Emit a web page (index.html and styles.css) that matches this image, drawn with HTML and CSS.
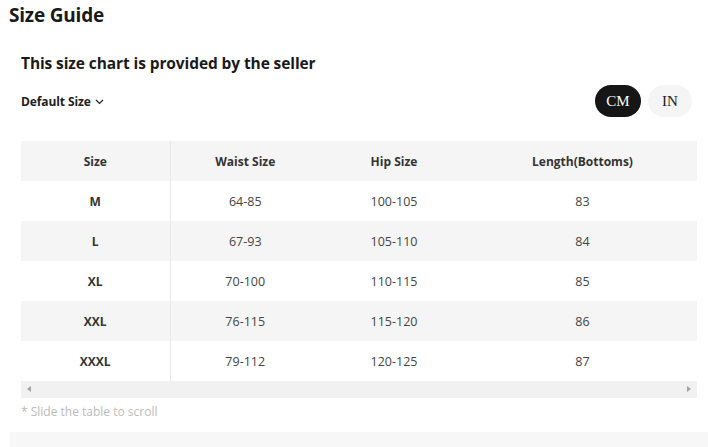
FILE: index.html
```html
<!DOCTYPE html>
<html>
<head>
<meta charset="utf-8">
<link rel="stylesheet" href="styles.css">
</head>
<body>
<div class="page">
  <h1 class="title">Size Guide</h1>
  <div class="content">
    <h2 class="subtitle">This size chart is provided by the seller</h2>
    <div class="controls">
      <div class="dropdown">Default Size
        <svg class="chev" width="9" height="6" viewBox="0 0 9 6"><path d="M1 1 L4.5 4.5 L8 1" fill="none" stroke="#222" stroke-width="1.2"/></svg>
      </div>
      <div class="units">
        <span class="unit active">CM</span>
        <span class="unit">IN</span>
      </div>
    </div>
    <div class="table-wrap">
      <table class="chart">
        <thead>
          <tr><th class="c1">Size</th><th class="c2">Waist Size</th><th class="c3">Hip Size</th><th class="c4">Length(Bottoms)</th></tr>
        </thead>
        <tbody>
          <tr><td class="c1">M</td><td>64-85</td><td>100-105</td><td>83</td></tr>
          <tr class="alt"><td class="c1">L</td><td>67-93</td><td>105-110</td><td>84</td></tr>
          <tr><td class="c1">XL</td><td>70-100</td><td>110-115</td><td>85</td></tr>
          <tr class="alt"><td class="c1">XXL</td><td>76-115</td><td>115-120</td><td>86</td></tr>
          <tr><td class="c1">XXXL</td><td>79-112</td><td>120-125</td><td>87</td></tr>
        </tbody>
      </table>
      <div class="scrollbar">
        <span class="arrow left"></span>
        <span class="arrow right"></span>
      </div>
    </div>
    <p class="hint">* Slide the table to scroll</p>
  </div>
  <div class="bottom-bar"></div>
</div>
</body>
</html>
```

FILE: styles.css
```css
* { box-sizing: border-box; }
html, body { margin: 0; padding: 0; background: #fff; }
body {
  font-family: "Open Sans", "Noto Sans", sans-serif;
  color: #222;
  overflow: hidden;
}
.page { width: 708px; height: 447px; position: relative; }
.title {
  margin: 0;
  padding: 2px 0 0 9px;
  font-size: 19px;
  font-weight: 700;
  line-height: 26px;
  color: #1a1a1a;
  letter-spacing: -0.2px;
}
.content { padding: 0 10px 0 21px; }
.subtitle {
  margin: 24px 0 0;
  font-size: 15.5px;
  font-weight: 700;
  line-height: 22px;
  color: #1a1a1a;
  letter-spacing: -0.1px;
}
.controls {
  display: flex;
  justify-content: space-between;
  align-items: center;
  margin-top: 11px;
  padding-right: 6px;
}
.dropdown {
  font-size: 12px;
  font-weight: 700;
  color: #222;
  display: flex;
  align-items: center;
  gap: 4px;
  letter-spacing: -0.1px;
}
.chev { margin-top: 2px; }
.units { display: flex; gap: 7px; }
.unit {
  font-family: "Liberation Serif", "Times New Roman", serif;
  font-size: 15px;
  height: 32px;
  min-width: 44px;
  padding: 0 10px;
  border-radius: 16px;
  display: flex;
  align-items: center;
  justify-content: center;
  background: #f5f5f5;
  color: #222;
}
.unit.active { background: #161616; color: #fff; min-width: 46px; }
.table-wrap { margin-top: 24px; width: 676px; }
.chart {
  border-collapse: collapse;
  width: 676px;
  table-layout: fixed;
  font-size: 12.5px;
}
.chart th, .chart td {
  height: 40px;
  text-align: center;
  padding: 0;
  color: #444;
}
.chart th { font-weight: 700; color: #333; background: #f5f5f5; font-size: 12px; }
.chart td { color: #444; }
.chart td.c1 { font-weight: 700; color: #333; font-size: 12px; }
.chart .c1 { width: 149px; border-right: 1px solid #e8e8e8; }
.chart .c2 { width: 150px; }
.chart .c3 { width: 148px; }
.chart tr.alt td { background: #f5f5f5; }
.scrollbar {
  height: 17px;
  background: #f1f1f1;
  position: relative;
}
.arrow {
  position: absolute;
  top: 5px;
  width: 0; height: 0;
  border-top: 3.5px solid transparent;
  border-bottom: 3.5px solid transparent;
}
.arrow.left { left: 6px; border-right: 4px solid #a3a3a3; }
.arrow.right { right: 6px; border-left: 4px solid #a3a3a3; }
.hint {
  margin: 6px 0 0;
  font-size: 12px;
  color: #bbb;
  line-height: 16px;
}
.bottom-bar {
  position: absolute;
  left: 10px; right: 0; bottom: 0;
  height: 15px;
  background: #f7f7f7;
}
```
